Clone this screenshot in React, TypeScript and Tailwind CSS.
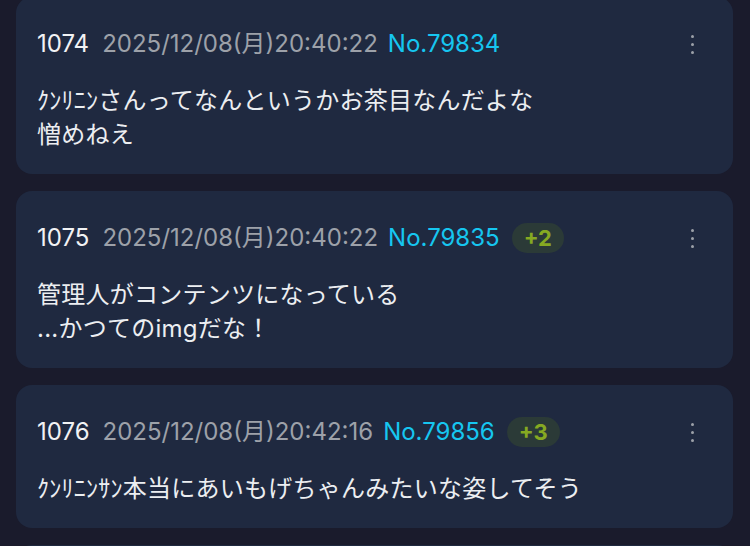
type Post = {
  num: number;
  date: string;
  no: number;
  replies?: number;
  lines: string[];
};

const posts: Post[] = [
  { num: 1074, date: '2025/12/08(月)20:40:22', no: 79834, lines: ['ｸﾝﾘﾆﾝさんってなんというかお茶目なんだよな', '憎めねえ'] },
  { num: 1075, date: '2025/12/08(月)20:40:22', no: 79835, replies: 2, lines: ['管理人がコンテンツになっている', '...かつてのimgだな！'] },
  { num: 1076, date: '2025/12/08(月)20:42:16', no: 79856, replies: 3, lines: ['ｸﾝﾘﾆﾝｻﾝ本当にあいもげちゃんみたいな姿してそう'] },
];

export default function App() {
  return (
    <div
      className="h-[546px] w-[750px] overflow-hidden bg-[#1a1b2c] pl-4 pr-[17px]"
      style={{ fontFamily: 'Inter, "Noto Sans CJK JP", sans-serif' }}
    >
      <div className="-mt-[3px] flex flex-col gap-[17px]">
        {posts.map(p => (
          <PostCard key={p.num} post={p} />
        ))}
        {/* next post, only its top edge is on screen */}
        <div className="h-20 rounded-2xl bg-[#1f2940]" />
      </div>
    </div>
  );
}

function PostCard({ post }: { post: Post }) {
  return (
    <div className="rounded-2xl bg-[#1f2940] pt-[27px] pb-[22px] pl-[21px] pr-[39px]">
      <div className="flex h-10 items-center text-[24px]">
        <span className="text-[#f1f2f4]">{post.num}</span>
        <span className="ml-[13px] text-[#9da1a9]">{post.date}</span>
        <span className="ml-[10px] text-[#16c6f0]">No.{post.no}</span>
        {post.replies && (
          <span className="ml-[12px] flex h-[30px] items-center rounded-full bg-[#2b3a37] px-[12px] text-[22px] font-bold text-[#86a922]">
            +{post.replies}
          </span>
        )}
        <div className="ml-auto flex flex-col items-center gap-[5px]">
          <span className="h-[3px] w-[3px] rounded-full bg-[#9ca0a8]" />
          <span className="h-[3px] w-[3px] rounded-full bg-[#9ca0a8]" />
          <span className="h-[3px] w-[3px] rounded-full bg-[#9ca0a8]" />
        </div>
      </div>
      <div className="mt-5 text-[24px] leading-[34px] tracking-[0.25px] text-[#eceef1]">
        {post.lines.map(l => (
          <p key={l}>{l}</p>
        ))}
      </div>
    </div>
  );
}
